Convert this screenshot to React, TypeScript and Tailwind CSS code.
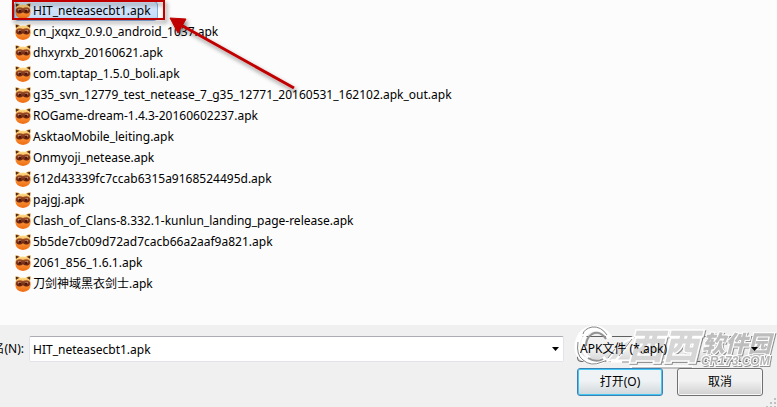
import { useState } from 'react';
import clsx from 'clsx';

const FILES = [
  'HIT_neteasecbt1.apk',
  'cn_jxqxz_0.9.0_android_1037.apk',
  'dhxyrxb_20160621.apk',
  'com.taptap_1.5.0_boli.apk',
  'g35_svn_12779_test_netease_7_g35_12771_20160531_162102.apk_out.apk',
  'ROGame-dream-1.4.3-20160602237.apk',
  'AsktaoMobile_leiting.apk',
  'Onmyoji_netease.apk',
  '612d43339fc7ccab6315a9168524495d.apk',
  'pajgj.apk',
  'Clash_of_Clans-8.332.1-kunlun_landing_page-release.apk',
  '5b5de7cb09d72ad7cacb66a2aaf9a821.apk',
  '2061_856_1.6.1.apk',
  '刀剑神域黑衣剑士.apk',
];

// Shared gradients for the file icons
function IconDefs() {
  return (
    <svg className="absolute h-0 w-0" aria-hidden="true">
      <defs>
        <linearGradient id="face" x1="0" y1="0" x2="0" y2="1">
          <stop offset="0" stopColor="#ffe08a" />
          <stop offset="0.3" stopColor="#f6b45c" />
          <stop offset="0.6" stopColor="#f58a30" />
          <stop offset="1" stopColor="#ef6c10" />
        </linearGradient>
        <linearGradient id="mask" x1="0" y1="0" x2="0" y2="1">
          <stop offset="0" stopColor="#a35226" />
          <stop offset="1" stopColor="#5e1c0c" />
        </linearGradient>
      </defs>
    </svg>
  );
}

function RaccoonIcon() {
  return (
    <svg viewBox="0 0 16 16" className="h-4 w-4 shrink-0" aria-hidden="true">
      <path d="M0.5 0.2 Q3.4 0 5.4 2 L1.4 5.4 Q0 3 0.5 0.2Z" fill="#d99a38" />
      <path d="M15.5 0.2 Q12.6 0 10.6 2 L14.6 5.4 Q16 3 15.5 0.2Z" fill="#d99a38" />
      <path d="M0.9 0.9 Q2.9 0.8 4.1 2 L1.7 4.2 Q0.7 2.6 0.9 0.9Z" fill="#4e2414" />
      <path d="M15.1 0.9 Q13.1 0.8 11.9 2 L14.3 4.2 Q15.3 2.6 15.1 0.9Z" fill="#4e2414" />
      <path d="M2 3 Q4.4 1.4 8 1.4 T14 3 Q15.9 5.4 15.8 8.6 Q15.2 15.9 8 15.9 Q0.8 15.9 0.2 8.6 Q0.1 5.4 2 3Z" fill="url(#face)" />
      <path d="M0.9 7 Q1.4 4.2 4.6 4.3 Q6.8 4.5 8 5.1 Q9.2 4.5 11.4 4.3 Q14.6 4.2 15.1 7 Q15.2 10.3 11.7 10.5 Q9.6 10.4 8 9.2 Q6.4 10.4 4.3 10.5 Q0.8 10.3 0.9 7Z" fill="url(#mask)" />
      <ellipse cx="4.5" cy="6.9" rx="1.5" ry="0.8" fill="#dcae94" />
      <ellipse cx="11.5" cy="6.9" rx="1.5" ry="0.8" fill="#dcae94" />
      <circle cx="4.9" cy="7.8" r="1.2" fill="#4b120b" />
      <circle cx="11.1" cy="7.8" r="1.2" fill="#4b120b" />
    </svg>
  );
}

// Red frame around the first file and the arrow pointing at it
function Annotation() {
  return (
    <svg
      viewBox="0 0 320 110"
      className="pointer-events-none absolute top-0 left-0 h-[110px] w-[320px]"
      aria-hidden="true"
    >
      <defs>
        <filter id="drop" x="-10%" y="-20%" width="120%" height="150%">
          <feDropShadow dx="2" dy="3" stdDeviation="2" floodColor="#000" floodOpacity="0.45" />
        </filter>
      </defs>
      <g filter="url(#drop)">
        <rect x="13" y="1" width="151" height="18" fill="none" stroke="#c00000" strokeWidth="2" />
        <path d="M181 25 L294 88" stroke="#c00000" strokeWidth="3" />
        <path d="M170 18 L186 19 L178 33Z" fill="#c00000" stroke="#c00000" />
      </g>
    </svg>
  );
}

// Embossed site logo lying over the file type box
function Watermark() {
  return (
    <svg
      viewBox="0 0 204 48"
      className="pointer-events-none absolute -top-[15px] -left-1 h-12 w-[204px] overflow-visible"
      fontFamily='"Noto Sans CJK SC", sans-serif'
      aria-hidden="true"
    >
      <defs>
        <filter id="emboss" x="-5%" y="-10%" width="110%" height="120%">
          <feDropShadow dx="1" dy="1" stdDeviation="0" floodColor="#777" floodOpacity="0.8" />
        </filter>
      </defs>
      <g fill="none" strokeLinejoin="round">
        <path d="M36 16 Q30 5 19 6 Q5 8 3 23 Q2 34 12 38 Q22 44 32 36" stroke="#fff" strokeWidth="5" />
        <path d="M34 14 Q27 5 18 8 Q9 11 9 23 Q9 33 16 36" stroke="#fff" strokeWidth="3" />
        <path d="M33 13 Q27 4 18 5 Q10 7 9 12 M4 20 Q2 33 9 38 Q17 45 28 40 L34 38" stroke="#858585" strokeWidth="1" />
        <path d="M32 17 Q26 8 18 12 Q12 16 12 24 M14 36 Q22 41 29 37" stroke="#929292" strokeWidth="2" />
        <path d="M33 39 L45 24 L59 15 L51 27 L42 38Z" fill="#dedede" stroke="#fff" strokeWidth="2" />
        <path d="M45 34 L58 17 M34 36 L41 27" stroke="#8c8c8c" strokeWidth="1" />
        <path d="M37 39 H116 Q120 38 121 34 L128 15 M56 45 H119" stroke="#fff" strokeWidth="3" />
        <path d="M48 40 H117 Q121 39 122 35 L129 16 M58 46 H118" stroke="#868686" strokeWidth="1" />
        <path d="M62 14 H92 M97 14 H127" stroke="#444" strokeWidth="1" />
      </g>
      <g filter="url(#emboss)" fontStyle="italic" fontWeight="900" stroke="#fff" paintOrder="stroke">
        <text x="54" y="37" fontSize="35" fill="#d6d6d6" strokeWidth="3">西西</text>
        <text x="128" y="30" fontSize="23" fill="#bdbdbd" strokeWidth="2">软件园</text>
        <text x="127" y="43" fontSize="12" fontFamily='"Liberation Sans", sans-serif' fill="#b4b4b4" strokeWidth="2">CR173.COM</text>
      </g>
    </svg>
  );
}

function DownArrow() {
  return (
    <svg viewBox="0 0 7 4" className="h-1 w-[7px]" aria-hidden="true">
      <path d="M0 0 H7 L3.5 4Z" fill="#000" />
    </svg>
  );
}

export default function App() {
  const [selected, setSelected] = useState(FILES[0]);

  return (
    <main className="relative flex min-h-screen flex-col overflow-hidden bg-[#fcfcfc] font-['Noto_Sans','Noto_Sans_CJK_SC',sans-serif] text-[12px] text-black">
      <IconDefs />
      <ul className="pb-[31px] pl-[14px]">
        {FILES.map((name) => (
          <li key={name} className="flex h-[21px] items-center">
            <button
              type="button"
              onClick={() => setSelected(name)}
              className={clsx(
                'flex h-5 items-center gap-0.5 rounded-sm border pr-1.5 whitespace-nowrap',
                name === selected
                  ? 'border-[#84acdd] bg-linear-to-b from-[#dceafb] to-[#c1dafa]'
                  : 'border-transparent',
              )}
            >
              <RaccoonIcon />
              {name}
            </button>
          </li>
        ))}
      </ul>
      <Annotation />

      <footer className="relative flex flex-1 gap-[13px] bg-[#f0f0f0] pt-[11px] pr-[14px] pb-3">
        <div className="flex h-[26px] flex-1 items-center">
          <div className="flex w-[29px] shrink-0 justify-end overflow-hidden pr-[5px]">
            <label htmlFor="filename" className="whitespace-nowrap">文件名(N):</label>
          </div>
          <div className="flex h-[26px] flex-1 items-center rounded-xs border border-[#e2e3ea] border-t-[#abadb3] bg-white">
            <input
              id="filename"
              className="h-full min-w-0 flex-1 px-[3px] outline-none"
              value={selected}
              onChange={(e) => setSelected(e.target.value)}
            />
            <button type="button" aria-label="文件名" className="flex h-full w-4 items-center justify-center">
              <DownArrow />
            </button>
          </div>
        </div>

        <div className="flex w-[186px] flex-col gap-[6px]">
          <div className="relative rounded-sm border border-[#606060] bg-linear-to-b from-[#f2f2f2] from-50% to-[#d5d5d5]">
            <Watermark />
            <select
              aria-label="APK文件 (*.apk)"
              className="relative block h-6 w-full appearance-none bg-transparent px-0.5"
            >
              <option>APK文件 (*.apk)</option>
            </select>
            <span className="pointer-events-none absolute top-[10px] right-1 flex">
              <DownArrow />
            </span>
          </div>
          <div className="relative flex gap-[14px]">
            <button
              type="button"
              className="h-7 flex-1 rounded-[3px] border border-[#3c7fb1] bg-linear-to-b from-[#f0f3f5] from-45% to-[#cfd6da] inset-ring inset-ring-[#3fc8f4]"
            >
              打开(O)
            </button>
            <button
              type="button"
              className="h-7 flex-1 rounded-[3px] border border-[#707070] bg-linear-to-b from-[#f2f2f2] from-45% to-[#d0d0d0] inset-ring inset-ring-[#f8f8f8]"
            >
              取消
            </button>
          </div>
        </div>

        {/* resize grip */}
        <svg viewBox="0 0 12 12" className="absolute right-0 bottom-0 h-3 w-3" aria-hidden="true">
          <path d="M9 2h2v2H9zM5 6h2v2H5zM9 6h2v2H9zM1 10h2v2H1zM5 10h2v2H5zM9 10h2v2H9z" fill="#bfbfbf" />
        </svg>
      </footer>
    </main>
  );
}
